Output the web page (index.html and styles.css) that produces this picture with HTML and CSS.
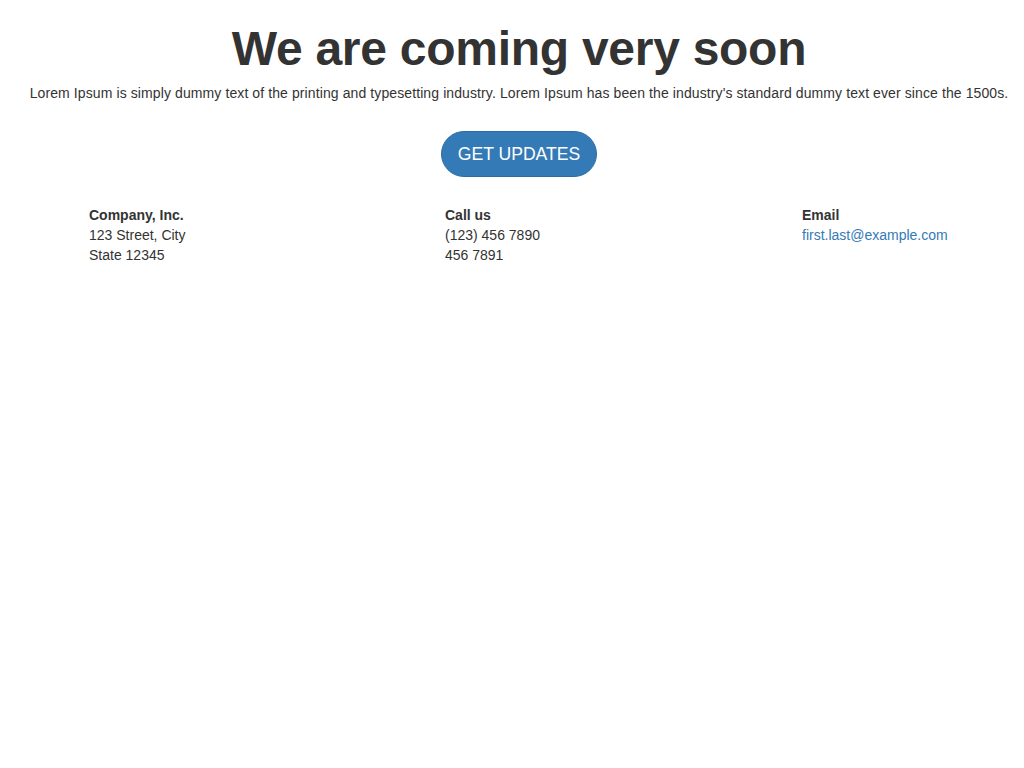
FILE: index.html
```html
<!DOCTYPE html>
<html>
<head>
<meta charset="utf-8">
<link rel="stylesheet" href="styles.css">
</head>
<body>
<div class="hero">
  <h1 class="title">We are coming very soon</h1>
  <p class="lead">Lorem Ipsum is simply dummy text of the printing and typesetting industry. Lorem Ipsum has been the industry's standard dummy text ever since the 1500s.</p>
  <div class="actions"><a class="btn" href="#">GET UPDATES</a></div>
</div>
<div class="contact">
  <div class="col">
    <strong>Company, Inc.</strong><br>
    123 Street, City<br>
    State 12345
  </div>
  <div class="col">
    <strong>Call us</strong><br>
    (123) 456 7890<br>
    456 7891
  </div>
  <div class="col">
    <strong>Email</strong><br>
    <a class="link" href="#">first.last@example.com</a>
  </div>
</div>
</body>
</html>
```

FILE: styles.css
```css
html, body {
  margin: 0;
  padding: 0;
  background: #fff;
}
body {
  font-family: "Liberation Sans", Arial, sans-serif;
  font-size: 14px;
  line-height: 20px;
  color: #333;
}
.hero {
  padding-left: 14px;
  text-align: center;
}
.title {
  margin: 23px 0 7px;
  font-size: 48px;
  line-height: 52.8px;
  font-weight: 700;
  letter-spacing: -0.27px;
  color: #333;
  white-space: nowrap;
}
.lead {
  margin: 0;
  white-space: nowrap;
  font-size: 14px;
  line-height: 20px;
  letter-spacing: 0.1px;
}
.actions {
  margin-top: 28px;
}
.btn {
  display: inline-block;
  box-sizing: border-box;
  height: 46px;
  padding: 0 16px;
  line-height: 44px;
  font-size: 17.6px;
  color: #fff;
  background: #337ab7;
  border: 1px solid #2e6da4;
  border-radius: 23px;
  text-decoration: none;
}
.contact {
  display: grid;
  grid-template-columns: 356px 357px 1fr;
  margin: 28px 0 0 89px;
}
.col strong {
  font-weight: 700;
}
.link {
  color: #337ab7;
  text-decoration: none;
}
```
